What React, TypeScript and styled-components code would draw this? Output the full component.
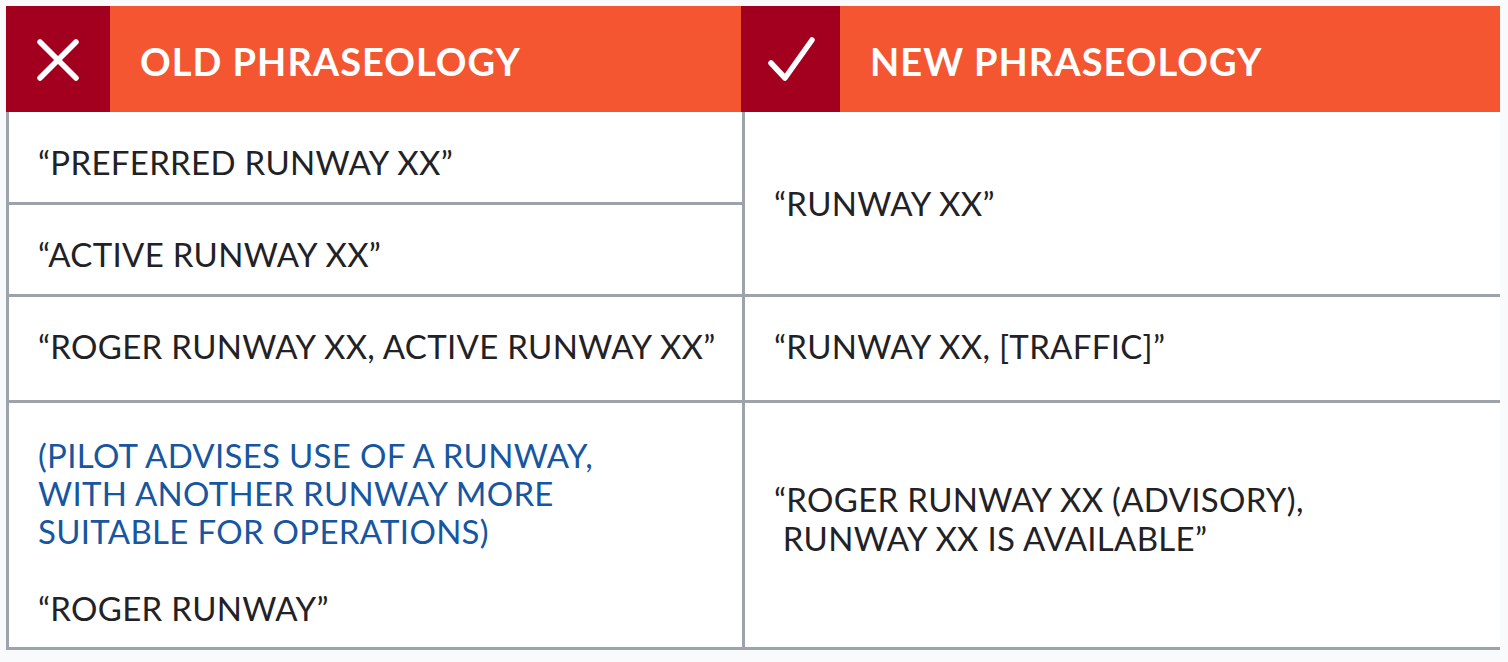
import { createGlobalStyle, styled } from "styled-components";

const GlobalStyle = createGlobalStyle`
  body {
    margin: 0;
    background: #f8fafc;
    font-family: Lato, "Open Sans", sans-serif;
  }
`;

const Page = styled.div`
  padding: 6px 8px 0 6px;
`;

const Table = styled.div`
  width: 1494px;
  display: flex;
  flex-direction: column;
`;

const HeaderRow = styled.div`
  display: grid;
  grid-template-columns: 735px 759px;
  height: 106px;
`;

const HeaderCell = styled.div`
  display: flex;
  align-items: stretch;
  background: #f45631;
`;

const IconBox = styled.div<{ $w: number }>`
  width: ${(p) => p.$w}px;
  background: #a3001f;
  display: flex;
  align-items: center;
  justify-content: center;
  padding-top: 2px;
  svg {
    width: 48px;
    height: 48px;
  }
`;

const HeaderTitle = styled.div`
  display: flex;
  align-items: center;
  padding: 3px 0 0 30px;
  color: #fff;
  font-weight: 700;
  font-size: 38px;
  letter-spacing: 1px;
`;

const Body = styled.div`
  display: grid;
  grid-template-columns: 733px 755px;
  grid-template-rows: 90px 89px 103px 244px;
  gap: 3px;
  background: #9da3a9;
  border: 3px solid #9da3a9;
  border-top: none;
`;

const Cell = styled.div<{ $span?: number; $shift?: number }>`
  background: #fff;
  display: flex;
  flex-direction: column;
  justify-content: center;
  padding: ${(p) => (p.$shift && p.$shift > 0 ? p.$shift * 2 : 0)}px 0
    ${(p) => (p.$shift && p.$shift < 0 ? -p.$shift * 2 : 0)}px 29px;
  grid-row: ${(p) => (p.$span ? `span ${p.$span}` : "auto")};
  color: #222226;
  font-size: 33px;
  letter-spacing: 0.3px;
  line-height: 39px;
`;

const Note = styled.div`
  color: #1756a0;
  line-height: 38px;
  margin-bottom: 39px;
`;

function XIcon() {
  return (
    <svg viewBox="0 0 48 48" fill="none" stroke="#fff" strokeWidth={5.5} strokeLinecap="round">
      <path d="M6 6 L42 42 M42 6 L6 42" />
    </svg>
  );
}

function CheckIcon() {
  return (
    <svg viewBox="0 0 48 48" fill="none" stroke="#fff" strokeWidth={5.5} strokeLinecap="round" strokeLinejoin="round">
      <path d="M4 27 L18 42 L45 4" />
    </svg>
  );
}

export default function App() {
  return (
    <Page>
      <GlobalStyle />
      <Table>
        <HeaderRow>
          <HeaderCell>
            <IconBox $w={104}>
              <XIcon />
            </IconBox>
            <HeaderTitle>OLD PHRASEOLOGY</HeaderTitle>
          </HeaderCell>
          <HeaderCell>
            <IconBox $w={99}>
              <CheckIcon />
            </IconBox>
            <HeaderTitle>NEW PHRASEOLOGY</HeaderTitle>
          </HeaderCell>
        </HeaderRow>
        <Body>
          <Cell $shift={5}>“PREFERRED RUNWAY XX”</Cell>
          <Cell $span={2}>“RUNWAY XX”</Cell>
          <Cell $shift={5}>“ACTIVE RUNWAY XX”</Cell>
          <Cell $shift={-2}>“ROGER RUNWAY XX, ACTIVE RUNWAY XX”</Cell>
          <Cell $shift={-2}>“RUNWAY XX, [TRAFFIC]”</Cell>
          <Cell $shift={7}>
            <Note>
              (PILOT ADVISES USE OF A RUNWAY,
              <br />
              WITH ANOTHER RUNWAY MORE
              <br />
              SUITABLE FOR OPERATIONS)
            </Note>
            <div>“ROGER RUNWAY”</div>
          </Cell>
          <Cell $shift={-6}>
            <div>“ROGER RUNWAY XX (ADVISORY),</div>
            <div>&nbsp;RUNWAY XX IS AVAILABLE”</div>
          </Cell>
        </Body>
      </Table>
    </Page>
  );
}
